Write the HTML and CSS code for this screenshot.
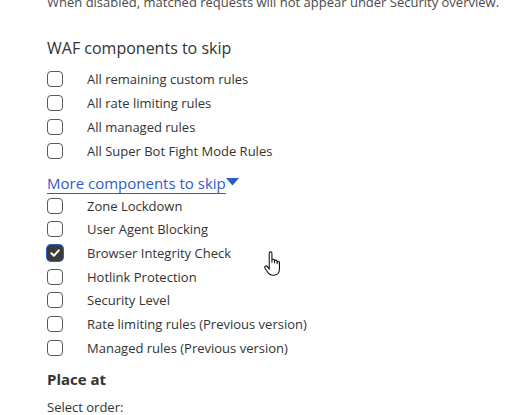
FILE: index.html
```html
<!DOCTYPE html>
<html>
<head>
<meta charset="utf-8">
<link rel="stylesheet" href="styles.css">
</head>
<body>
<div class="page">
  <p class="note">When disabled, matched requests will not appear under Security overview.</p>
  <h3 class="heading">WAF components to skip</h3>
  <ul class="checks">
    <li class="row"><span class="box"></span><span class="label">All remaining custom rules</span></li>
    <li class="row"><span class="box"></span><span class="label">All rate limiting rules</span></li>
    <li class="row"><span class="box"></span><span class="label">All managed rules</span></li>
    <li class="row"><span class="box"></span><span class="label">All Super Bot Fight Mode Rules</span></li>
  </ul>
  <a class="more" href="#">More components to skip</a><svg class="caret" width="13" height="8" viewBox="0 0 13 8"><path d="M0 0H13L6.5 7.5Z" fill="#2f5bc6"/></svg>
  <ul class="checks second">
    <li class="row"><span class="box"></span><span class="label">Zone Lockdown</span></li>
    <li class="row"><span class="box"></span><span class="label">User Agent Blocking</span></li>
    <li class="row"><span class="box checked"><svg width="12" height="12" viewBox="0 0 12 12"><path d="M2.3 6.2L4.9 8.7L9.8 3.4" fill="none" stroke="#fff" stroke-width="2" stroke-linecap="round" stroke-linejoin="round"/></svg></span><span class="label">Browser Integrity Check</span>
      <svg class="cursor" width="20" height="28" viewBox="0 0 18 26"><path d="M5.5 2.2C5.5 1.3 6.2 0.8 6.8 0.8C7.5 0.8 8 1.3 8 2.2V10.5V8.8C8 8 8.6 7.6 9.2 7.6C9.9 7.6 10.4 8 10.4 8.8V11V9.6C10.4 8.9 11 8.5 11.6 8.5C12.3 8.5 12.8 8.9 12.8 9.6V11.8V10.6C12.8 10 13.3 9.6 13.9 9.6C14.5 9.6 15 10 15 10.6V16.5C15 20 13 22.5 9.8 22.5H8.8C6.6 22.5 5.3 21.5 4.1 19.8L1.6 16C1.1 15.3 1.3 14.5 1.9 14.1C2.5 13.7 3.3 13.9 3.8 14.5L5.5 16.8Z" fill="#fff" stroke="#111" stroke-width="1" stroke-linejoin="round"/></svg>
    </li>
    <li class="row"><span class="box"></span><span class="label">Hotlink Protection</span></li>
    <li class="row"><span class="box"></span><span class="label">Security Level</span></li>
    <li class="row"><span class="box"></span><span class="label">Rate limiting rules (Previous version)</span></li>
    <li class="row"><span class="box"></span><span class="label">Managed rules (Previous version)</span></li>
  </ul>
  <h4 class="place">Place at</h4>
  <p class="order">Select order:</p>
</div>
</body>
</html>
```
FILE: styles.css
```css
html, body {
  margin: 0;
  padding: 0;
  background: #fff;
  overflow: hidden;
}
.page {
  padding-left: 47px;
  font-family: "Open Sans", "Noto Sans", sans-serif;
  color: #313131;
  font-size: 13px;
}
.note {
  margin: -7px 0 0 0;
  line-height: 18px;
  color: #4a4a4a;
  font-size: 13px;
}
.heading {
  margin: 26px 0 0 0;
  font-size: 16px;
  font-weight: 400;
  line-height: 22px;
  color: #333;
}
.checks {
  list-style: none;
  margin: 8px 0 0 0;
  padding: 0;
}
.row {
  position: relative;
  display: flex;
  align-items: center;
  height: 24px;
}
.second .row {
  height: 23.67px;
}
.box {
  box-sizing: border-box;
  width: 16px;
  height: 16px;
  border: 1px solid #595959;
  border-radius: 4px;
  margin-right: 24px;
  display: flex;
  align-items: center;
  justify-content: center;
  flex: none;
}
.box.checked {
  background: #3a3a3a;
  border-color: #3a3a3a;
  box-shadow: 0 0 0 1px #2f5bc6;
}
.label {
  line-height: 18px;
  color: #333;
}
.more {
  display: inline-block;
  margin-top: 10px;
  font-size: 15px;
  line-height: 20px;
  color: #2f5bc6;
  text-decoration: none;
  border-bottom: 1px solid #2f5bc6;
}
.caret {
  display: inline-block;
  vertical-align: 3px;
}
.second {
  margin-top: 0;
}
.cursor {
  position: absolute;
  left: 216px;
  top: 10px;
}
.place {
  margin: 9px 0 0 0;
  font-size: 15px;
  font-weight: 700;
  line-height: 20px;
  color: #333;
}
.order {
  margin: 9px 0 0 0;
  font-size: 13px;
  line-height: 18px;
  color: #333;
}
```
